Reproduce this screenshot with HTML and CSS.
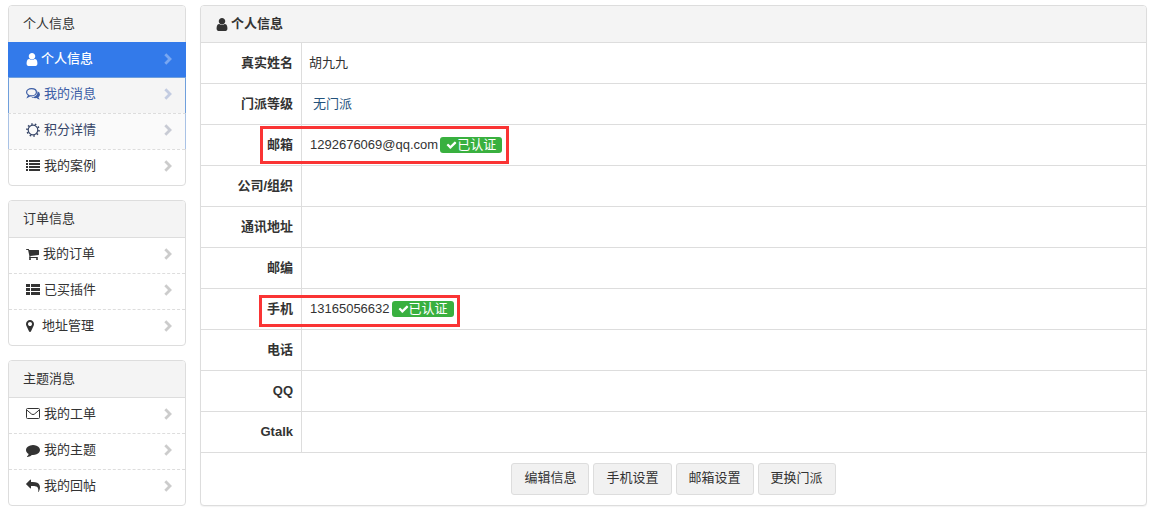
FILE: index.html
```
<!DOCTYPE html>
<html lang="zh-CN">
<head>
<meta charset="utf-8">
<title>个人信息</title>
<link rel="stylesheet" href="styles.css">
</head>
<body>
<svg class="sprite" aria-hidden="true">
  <symbol id="user" viewBox="256 128 1280 1536"><path d="M1536 1399q0 109-62.500 187t-150.500 78h-854q-88 0-150.500-78t-62.500-187q0-85 8.500-160.500t31.500-152 58.500-131 94-89 134.500-34.500q131 128 313 128t313-128q76 0 134.500 34.500t94 89 58.500 131 31.500 152 8.500 160.500zm-256-887q0 159-112.500 271.500t-271.500 112.500-271.500-112.500-112.500-271.500 112.500-271.500 271.500-112.500 271.500 112.500 112.500 271.500z"/></symbol>
  <symbol id="check" viewBox="0 0 1792 1792"><path d="M1671 566q0 40-28 68l-724 724-136 136q-28 28-68 28t-68-28l-136-136-362-362q-28-28-28-68t28-68l136-136q28-28 68-28t68 28l294 295 656-657q28-28 68-28t68 28l136 136q28 28 28 68z"/></symbol>
  <symbol id="cart" viewBox="64 0 1664 1792"><path d="M704 1536q0 52-38 90t-90 38-90-38-38-90 38-90 90-38 90 38 38 90zm896 0q0 52-38 90t-90 38-90-38-38-90 38-90 90-38 90 38 38 90zm128-1088v512q0 24-16.500 42.500t-40.500 21.500l-1044 122q13 60 13 70 0 16-24 64h920q26 0 45 19t19 45-19 45-45 19h-1024q-26 0-45-19t-19-45q0-11 8-31.500t16-36 21.500-40 15.500-29.500l-177-823h-204q-26 0-45-19t-19-45 19-45 45-19h256q16 0 28.500 6.500t19.500 15.500 13 24.500 8 26 5.500 29.500 4.500 26h1201q26 0 45 19t19 45z"/></symbol>
  <symbol id="reply" viewBox="0 0 1792 1792"><path transform="translate(1792 0) scale(-1 1)" d="M1792 640q0 26-19 45l-512 512q-19 19-45 19t-45-19-19-45v-256h-224q-98 0-175.500 6t-154 21.500-133 42.500-105.500 69.500-80 101-48.500 138.500-17.500 181q0 55 5 123 0 6 2.500 23.500t2.500 26.500q0 15-8.500 25t-23.500 10q-16 0-28-17-7-9-13-22t-13.500-30-10.500-24q-127-285-127-451 0-199 53-333 162-403 875-403h224v-256q0-26 19-45t45-19 45 19l512 512q19 19 19 45z"/></symbol>
  <symbol id="marker" viewBox="384 0 1024 1792"><path d="M1152 640q0-106-75-181t-181-75-181 75-75 181 75 181 181 75 181-75 75-181zm256 0q0 109-33 179l-364 774q-16 33-47.500 52t-67.500 19-67.500-19-46.500-52l-365-774q-33-70-33-179 0-212 150-362t362-150 362 150 150 362z"/></symbol>
  <symbol id="comment" viewBox="0 0 1792 1792"><path d="M1792 896q0 174-120 321.500t-326 233-450 85.500q-70 0-145-8-198 175-460 242-49 14-114 22-17 2-30.500-9t-17.500-29v-1q-3-4-.5-12t2-10 4.500-9.500l6-9 7-8.500 8-9q7-8 31-34.500t34.500-38 31-39.500 32.500-51 27-59 26-76q-157-89-247.500-220t-90.500-281q0-130 71-248.500t191-204.500 286-136.500 348-50.500q244 0 450 85.500t326 233 120 321.500z"/></symbol>
  <symbol id="comments" viewBox="0 0 14 14"><path d="M5.500 1.600C2.800 1.600.6 3.100.6 5.200c0 1.300.8 2.400 2 3L1.700 10l2.500-1.300q.6.200 1.300.2c2.700 0 4.900-1.500 4.900-3.700S8.200 1.600 5.500 1.600z" fill="none" stroke="currentColor" stroke-width="1.200"/><path d="M11.400 4.200Q14 5.200 14 7.500c0 1.200-.6 2.200-1.600 2.800q.4 1.100 1.400 2.100c-1.300 0-2.400-.5-3.200-1.300-2.100.3-4-.1-5.200-1.100 3.800.1 6.500-2.200 6-5.800z"/></symbol>
  <symbol id="sun" viewBox="0 0 14 14"><circle cx="7" cy="7" r="4.800" fill="none" stroke="currentColor" stroke-width="1.200"/><circle cx="7" cy="7" r="6" fill="none" stroke="currentColor" stroke-width="1.600" pathLength="40" stroke-dasharray="1.700 2.300"/></symbol>
  <symbol id="list" viewBox="0 0 14 14"><path d="M0 1h2v2H0zm3 0h11v2H3zM0 4h2v2H0zm3 0h11v2H3zM0 7h2v2H0zm3 0h11v2H3zM0 10h2v2H0zm3 0h11v2H3z"/></symbol>
  <symbol id="blocks" viewBox="0 0 14 14"><path d="M0 1h4v3H0zm5 0h9v3H5zM0 5h4v3H0zm5 0h9v3H5zM0 9h4v3H0zm5 0h9v3H5z"/></symbol>
  <symbol id="mail" viewBox="0 0 14 14"><path d="M1.500 1.500h11a1 1 0 0 1 1 1v8a1 1 0 0 1-1 1h-11a1 1 0 0 1-1-1v-8a1 1 0 0 1 1-1zM.8 3l4.700 4q1.500 1.200 3 0l4.700-4" fill="none" stroke="currentColor"/></symbol>
  <symbol id="arrow" viewBox="0 0 10 14"><path d="M2.300 2.300L7 7l-4.700 4.700" fill="none" stroke="currentColor" stroke-width="2.800"/></symbol>
</svg>
<div class="layout">
  <nav class="sidebar">
    <section class="panel menu">
      <h2 class="menu-title">个人信息</h2>
      <a class="item active" href="#"><svg class="icon narrow"><use href="#user"/></svg>个人信息<svg class="arrow"><use href="#arrow"/></svg></a>
      <a class="item hovered" href="#"><svg class="icon"><use href="#comments"/></svg>我的消息<svg class="arrow"><use href="#arrow"/></svg></a>
      <a class="item fading" href="#"><svg class="icon"><use href="#sun"/></svg>积分详情<svg class="arrow"><use href="#arrow"/></svg></a>
      <a class="item" href="#"><svg class="icon"><use href="#list"/></svg>我的案例<svg class="arrow"><use href="#arrow"/></svg></a>
    </section>
    <section class="panel menu">
      <h2 class="menu-title">订单信息</h2>
      <a class="item" href="#"><svg class="icon medium"><use href="#cart"/></svg>我的订单<svg class="arrow"><use href="#arrow"/></svg></a>
      <a class="item" href="#"><svg class="icon"><use href="#blocks"/></svg>已买插件<svg class="arrow"><use href="#arrow"/></svg></a>
      <a class="item" href="#"><svg class="icon slim"><use href="#marker"/></svg>地址管理<svg class="arrow"><use href="#arrow"/></svg></a>
    </section>
    <section class="panel menu">
      <h2 class="menu-title">主题消息</h2>
      <a class="item" href="#"><svg class="icon"><use href="#mail"/></svg>我的工单<svg class="arrow"><use href="#arrow"/></svg></a>
      <a class="item" href="#"><svg class="icon"><use href="#comment"/></svg>我的主题<svg class="arrow"><use href="#arrow"/></svg></a>
      <a class="item" href="#"><svg class="icon"><use href="#reply"/></svg>我的回帖<svg class="arrow"><use href="#arrow"/></svg></a>
    </section>
  </nav>
  <main class="panel profile">
    <h1 class="profile-title"><svg class="icon narrow"><use href="#user"/></svg>个人信息</h1>
    <table class="info">
      <tr><th scope="row">真实姓名</th><td>胡九九</td></tr>
      <tr><th scope="row">门派等级</th><td><a class="sect" href="#">无门派</a></td></tr>
      <tr class="marked mail-row"><th scope="row">邮箱</th><td><span class="value">1292676069@qq.com</span><span class="badge"><svg class="tick"><use href="#check"/></svg>已认证</span></td></tr>
      <tr><th scope="row">公司/组织</th><td></td></tr>
      <tr><th scope="row">通讯地址</th><td></td></tr>
      <tr><th scope="row">邮编</th><td></td></tr>
      <tr class="marked phone-row"><th scope="row">手机</th><td><span class="value">13165056632</span><span class="badge"><svg class="tick"><use href="#check"/></svg>已认证</span></td></tr>
      <tr><th scope="row">电话</th><td></td></tr>
      <tr><th scope="row">QQ</th><td></td></tr>
      <tr><th scope="row">Gtalk</th><td></td></tr>
    </table>
    <div class="actions">
      <button class="btn" type="button">编辑信息</button>
      <button class="btn" type="button">手机设置</button>
      <button class="btn" type="button">邮箱设置</button>
      <button class="btn" type="button">更换门派</button>
    </div>
  </main>
</div>
</body>
</html>
```
FILE: styles.css
```
*, *::after { box-sizing: border-box; }
body {
  margin: 0;
  padding: 5px 7px 5px 8px;
  background: #fff;
  color: #333;
  font: 13px/20px "Liberation Sans", "Noto Sans CJK SC", sans-serif;
}
.sprite { position: absolute; width: 0; height: 0; }
svg { fill: currentColor; }
a { color: inherit; text-decoration: none; }
.layout {
  display: grid;
  grid-template-columns: 178px 1fr;
  gap: 14px;
  align-items: start;
}
.sidebar { display: grid; gap: 14px; }
.panel {
  border: 1px solid #ddd;
  border-radius: 4px;
  background: #fff;
}
.menu-title {
  margin: 0;
  padding: 8px 14px;
  border-radius: 3px 3px 0 0;
  background: #f4f4f4;
  font-size: 13px;
  font-weight: 400;
}
.item {
  display: flex;
  align-items: center;
  height: 36px;
  padding: 0 12px 3px 17px;
  border-top: 1px dashed #ddd;
}
.menu-title + .item { border-top-style: solid; }
.icon {
  flex: none;
  width: 14px;
  height: 14px;
  margin-right: 4px;
}
.narrow { width: 12px; height: 13px; margin-right: 3px; }
.medium { width: 13px; }
.slim { width: 8px; margin-right: 8px; }
.arrow {
  width: 10px;
  height: 14px;
  margin-left: auto;
  color: #ccc;
}
.menu .active {
  height: 35px;
  margin: 0 -1px;
  padding: 0 13px 2px 18px;
  border-top-color: #337aea;
  background: #337aea;
  color: #fff;
  font-weight: 500;
}
.active .arrow { color: #79a7f1; }
.hovered, .fading {
  margin: 0 -1px;
  border-left: 1px solid #6f9fdc;
  border-right: 1px solid #6f9fdc;
}
.hovered {
  border-top: 1px solid #6f9fdc;
  background: #f5f5f5;
  color: #3c5da5;
}
.hovered .arrow { color: #c3cce1; }
.fading {
  border-left-color: #a9c2e5;
  border-right-color: #a9c2e5;
  background: #fafafa;
  color: #374668;
}
.fading .arrow { color: #c8cbd4; }
.profile { box-shadow: 0 1px 1px rgba(0, 0, 0, .05); }
.profile-title {
  display: flex;
  align-items: center;
  margin: 0;
  padding: 8px 15px;
  border-radius: 3px 3px 0 0;
  background: #f4f4f4;
  font-size: 13px;
  font-weight: 700;
}
.info { width: 100%; border-collapse: separate; border-spacing: 0; }
.info th, .info td {
  height: 41px;
  padding: 0 8px 0 7px;
  border-top: 1px solid #ddd;
}
.info th { width: 101px; border-right: 1px solid #ddd; text-align: right; }
.info td { text-align: left; }
.info tr { position: relative; }
.info .marked { z-index: 1; }
.sect { margin-left: 4px; color: #23527c; }
.value { margin: 0 2px 0 1px; }
.badge {
  display: inline-flex;
  align-items: center;
  height: 16px;
  margin-bottom: 2px;
  padding: 0 6px;
  border-radius: 3px;
  background: #39b03f;
  color: #fff;
  vertical-align: middle;
}
.tick { width: 11px; height: 12px; }
.marked::after {
  content: "";
  position: absolute;
  border: 3px solid #fa3434;
  pointer-events: none;
}
.mail-row::after { top: 2px; left: 59px; width: 249px; height: 38px; }
.phone-row::after { top: 7px; left: 58px; width: 201px; height: 32px; }
.actions {
  display: flex;
  justify-content: center;
  gap: 4px;
  padding: 10px;
  border-top: 1px solid #ddd;
}
.btn {
  height: 32px;
  padding: 0 12px 2px;
  border: 1px solid #ddd;
  border-radius: 3px;
  background: #f1f1f1;
  color: #333;
  font: inherit;
}
```
